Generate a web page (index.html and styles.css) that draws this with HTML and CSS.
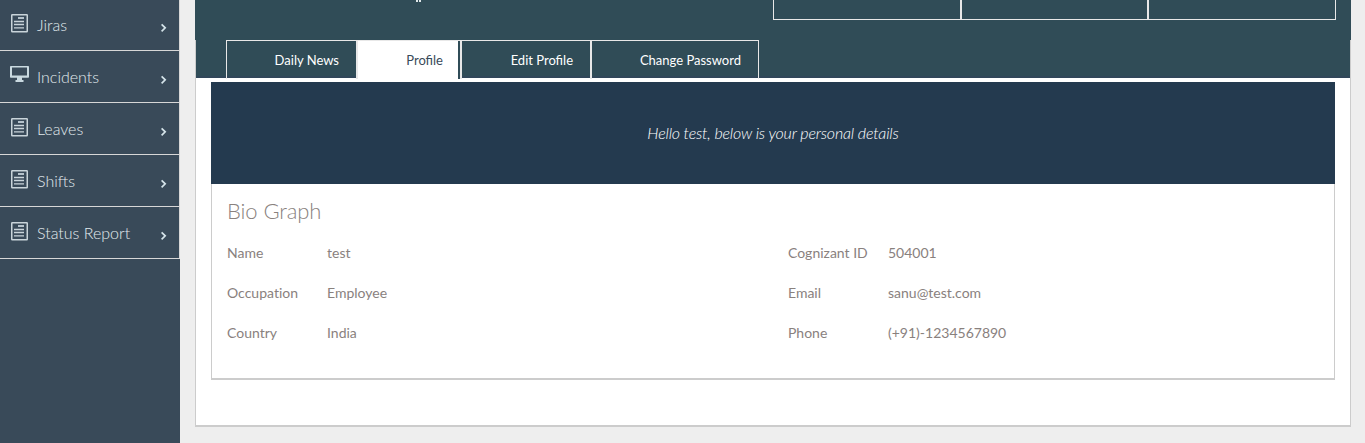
FILE: index.html
```
<!DOCTYPE html>
<html lang="en">
<head>
<meta charset="utf-8">
<title>Profile</title>
<link rel="stylesheet" href="styles.css">
</head>
<body>
<svg class="defs" width="0" height="0">
  <symbol id="doc" viewBox="0 0 20 20">
    <rect x="1.75" y="1.75" width="15.5" height="17" rx=".5" fill="none" stroke="#c9d4da" stroke-width="1.5"/>
    <path d="M8 5h6" stroke="#b5c2cb" stroke-width="2"/>
    <path d="M4 8.5h10M4 11.5h10M4 14.8h10" stroke="#c9d4da" stroke-width="1.3"/>
  </symbol>
  <symbol id="screen" viewBox="0 0 20 20">
    <path fill-rule="evenodd" d="M.8 1h17.4q.8 0 .8.8V12q0 .8-.8.8H12V15h1.5v2h-8v-2H7v-2.2H.8Q0 12.8 0 12V1.8Q0 1 .8 1zM2 2.6v8h15v-8z" fill="#c9d9e0"/>
  </symbol>
  <symbol id="arrow" viewBox="0 0 8 10">
    <path d="M1.6 1.3 5.2 4.8 1.6 8.3" fill="none" stroke="#d5e4ea" stroke-width="1.7"/>
  </symbol>
</svg>
<div class="page">
  <nav class="sidebar">
    <a class="item"><svg class="icon"><use href="#doc"/></svg><span class="label">Jiras</span><svg class="arrow"><use href="#arrow"/></svg></a>
    <a class="item"><svg class="icon"><use href="#screen"/></svg><span class="label">Incidents</span><svg class="arrow"><use href="#arrow"/></svg></a>
    <a class="item"><svg class="icon"><use href="#doc"/></svg><span class="label">Leaves</span><svg class="arrow"><use href="#arrow"/></svg></a>
    <a class="item"><svg class="icon"><use href="#doc"/></svg><span class="label">Shifts</span><svg class="arrow"><use href="#arrow"/></svg></a>
    <a class="item"><svg class="icon"><use href="#doc"/></svg><span class="label">Status Report</span><svg class="arrow"><use href="#arrow"/></svg></a>
  </nav>
  <main class="main">
    <header class="hero">
      <svg class="title-tail" width="6" height="2" viewBox="0 0 6 2"><path d="M0 0h2v2H0zM3 0h2v2H3z" fill="#dfe8ea"/></svg>
      <div class="stats"><div class="stat"></div><div class="stat middle"></div><div class="stat"></div></div>
    </header>
    <section class="panel">
      <div class="tabs">
        <a class="tab news">Daily News</a>
        <a class="tab profile">Profile</a>
        <a class="tab edit">Edit Profile</a>
        <a class="tab password">Change Password</a>
      </div>
      <div class="banner">Hello test, below is your personal details</div>
      <div class="bio">
        <h1 class="heading">Bio Graph</h1>
        <dl class="details">
          <dt>Name</dt><dd>test</dd><dt>Cognizant ID</dt><dd>504001</dd>
          <dt>Occupation</dt><dd>Employee</dd><dt>Email</dt><dd>sanu@test.com</dd>
          <dt>Country</dt><dd>India</dd><dt>Phone</dt><dd>(+91)-1234567890</dd>
        </dl>
      </div>
    </section>
  </main>
</div>
</body>
</html>
```
FILE: styles.css
```
* { box-sizing: border-box; }
body { margin: 0; background: #eee; font-family: Lato, sans-serif; overflow: hidden; }
.defs { display: block; height: 0; }
.page { display: flex; height: 443px; }
.sidebar { width: 180px; flex: none; background: #394a59; overflow: hidden; }
.item { display: flex; align-items: flex-start; height: 52px; border-bottom: 1px solid #d7d7d7; border-right: 1px solid #d7d7d7; padding: 14px 10px 0; color: #e2eaee; font-size: 16px; font-weight: 300; }
.item:first-child { margin-top: -1px; }
.icon { width: 20px; height: 20px; margin-right: 7px; flex: none; }
.label { flex: 1; line-height: 24px; white-space: nowrap; }
.arrow { width: 8px; height: 10px; margin: 10.4px .6px 0 0; flex: none; }
.main { width: 1156px; margin-left: 15px; }
.hero { display: flex; justify-content: space-between; height: 40px; background: #304c57; padding: 0 15px 0 221px; }
.title-tail { display: block; }
.stats { display: flex; height: 20px; }
.stat { width: 188px; border: 1px solid #e8e8e8; border-top: 0; }
.stat.middle { width: 187px; }
.panel { height: 387px; background: #fff; border: 1px solid #ccc; border-width: 0 1px 2px; }
.tabs { display: flex; height: 38px; background: #304c57; border-bottom: 2px solid #31475a; padding-left: 30px; }
.tab { height: 39px; flex: none; border: 1px solid #e8e8e8; border-bottom: 0; padding-right: 17px; text-align: right; font-size: 13px; line-height: 38px; color: #fff; font-weight: 400; white-space: nowrap; }
.news { width: 131px; }
.profile { width: 104px; background: linear-gradient(to right, #fff 100px, #304c57 100px); color: #394a59; }
.edit { width: 130px; }
.password { width: 168px; }
.banner { height: 102px; margin: 4px 15px 0; background: #243a4f; color: #fff; font-size: 16px; font-style: italic; font-weight: 300; letter-spacing: -.17px; line-height: 102px; text-align: center; }
.bio { height: 196px; margin: 0 15px; border: 1px solid #ccc; border-width: 0 1px 2px; padding: 14px 15px 0; color: #89817e; }
.heading { margin: 0; font-size: 22px; line-height: 26px; font-weight: 300; letter-spacing: -.1px; }
.details { display: grid; grid-template-columns: 100px 461px 100px 1fr; grid-auto-rows: 40px; margin: 9px 0 0; font-size: 14px; line-height: 40px; font-variant-ligatures: none; }
.details dt, .details dd { margin: 0; }
```
